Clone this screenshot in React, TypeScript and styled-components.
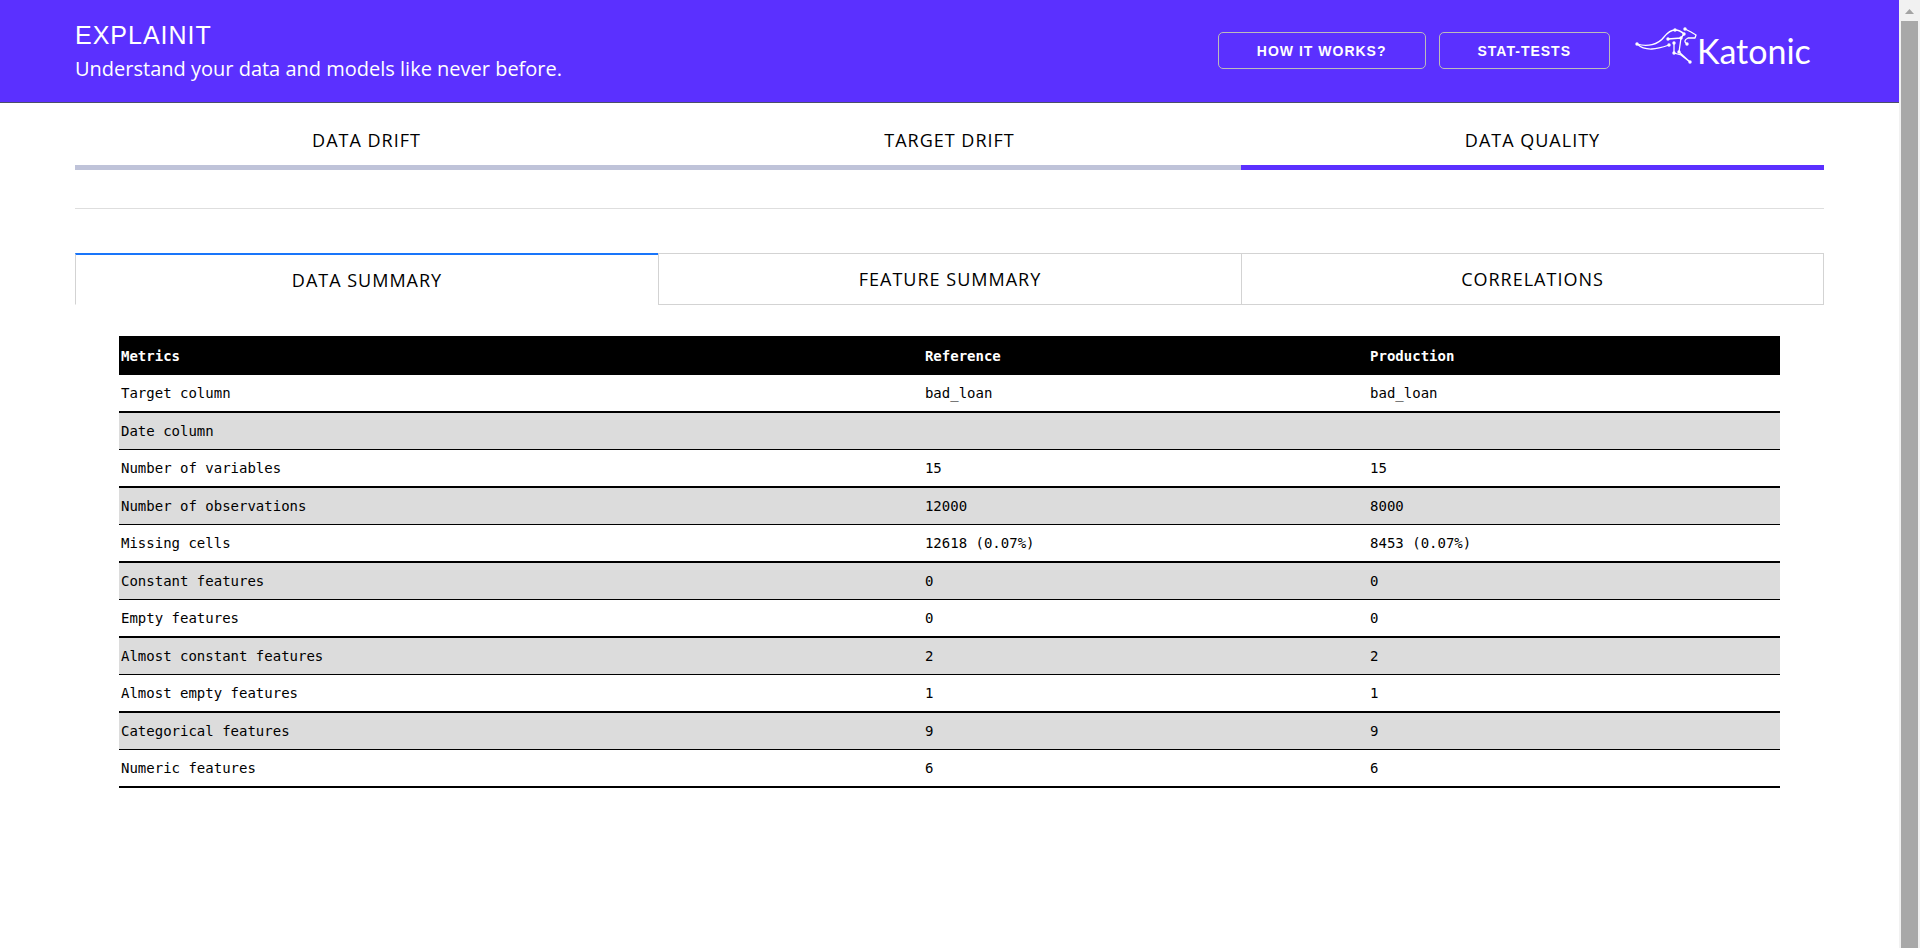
import React from "react";
import styled, { createGlobalStyle } from "styled-components";

const GlobalStyle = createGlobalStyle`
  * { box-sizing: border-box; }
  html, body { margin: 0; height: 100%; background: #fff; color: #000; }
  #root { height: 100%; overflow: hidden; }
  body { font-family: "Open Sans", "Liberation Sans", sans-serif; overflow: hidden; }
`;

const Shell = styled.div`
  display: grid;
  grid-template-columns: minmax(0, 1fr) 21px;
  min-height: 100vh;
`;

const Page = styled.div`
  min-width: 0;
`;

const Scrollbar = styled.div`
  display: flex;
  flex-direction: column;
  align-items: center;
  background: #f1f1f1;
`;

const ScrollArrow = styled.svg`
  flex: none;
  width: 21px;
  height: 21px;
`;

const ScrollThumb = styled.div`
  flex: 1;
  width: 17px;
  background: #a8a8a8;
`;

const Header = styled.header`
  display: flex;
  align-items: center;
  justify-content: space-between;
  height: 103px;
  padding: 0 86px 0 75px;
  background: #5b30ff;
  border-bottom: 1px solid #4c4f69;
  color: #fff;
`;

const Brand = styled.div`
  padding-top: 2px;
`;

const Title = styled.h1`
  margin: 0;
  font: 400 25px/34px "Liberation Sans", Arial, sans-serif;
  letter-spacing: 1px;
`;

const Subtitle = styled.p`
  margin: 0;
  font-size: 20px;
  line-height: 34px;
`;

const Actions = styled.div`
  display: flex;
  align-items: center;
  gap: 13px;
  padding-bottom: 2px;
`;

const HeaderButton = styled.button`
  height: 37px;
  padding: 2px 38px 0;
  border: 1px solid #bbb;
  border-radius: 5px;
  background: transparent;
  color: #fff;
  font: 700 14px/20px "Liberation Sans", Arial, sans-serif;
  letter-spacing: 1px;
`;

const Logo = styled.svg`
  width: 180px;
  height: 52px;
  margin-left: 10px;
`;

const Content = styled.main`
  padding: 0 75px;
`;

const TabList = styled.div`
  display: grid;
  grid-template-columns: repeat(3, 1fr);
`;

const MainTab = styled.button<{ $active?: boolean }>`
  height: 67px;
  padding: 12px 0 0;
  border: 0;
  border-bottom: 5px solid ${(p) => (p.$active ? "#5b30ff" : "#bfc3d9")};
  background: #fff;
  color: #000;
  font: 500 18px/24px "Open Sans", sans-serif;
  letter-spacing: 1px;
`;

const Divider = styled.hr`
  height: 1px;
  margin: 38px 0 44px;
  border: 0;
  background: #dedede;
`;

const SubTab = styled.button<{ $active?: boolean }>`
  height: 52px;
  padding: 0;
  border: 1px solid #d3d3d3;
  border-right-width: 0;
  border-top: ${(p) => (p.$active ? "2px solid #1975fa" : "1px solid #d3d3d3")};
  border-bottom-color: ${(p) => (p.$active ? "#fff" : "#d3d3d3")};
  background: #fff;
  color: #000;
  font: 500 18px/24px "Open Sans", sans-serif;
  letter-spacing: 1px;

  &:last-child {
    border-right-width: 1px;
  }
`;

const TablePanel = styled.section`
  padding: 31px 44px;
`;

const SummaryTable = styled.table`
  width: 100%;
  border-collapse: separate;
  border-spacing: 0;
  table-layout: fixed;
  font: 400 14px/20px "DejaVu Sans Mono", monospace;
`;

const HeadCell = styled.th<{ $width?: string }>`
  width: ${(p) => p.$width ?? "auto"};
  height: 39px;
  padding: 0 2px;
  background: #000;
  color: #fff;
  font-weight: 700;
  text-align: left;
`;

const Cell = styled.td`
  height: 38px;
  padding: 0 2px;
  border-bottom: 2px solid #000;
`;

const Row = styled.tr`
  &:nth-child(even) ${Cell} {
    height: 37px;
    border-bottom-width: 1px;
    background: #dcdcdc;
  }
`;

const metrics: [string, string, string][] = [
  ["Target column", "bad_loan", "bad_loan"],
  ["Date column", "", ""],
  ["Number of variables", "15", "15"],
  ["Number of observations", "12000", "8000"],
  ["Missing cells", "12618 (0.07%)", "8453 (0.07%)"],
  ["Constant features", "0", "0"],
  ["Empty features", "0", "0"],
  ["Almost constant features", "2", "2"],
  ["Almost empty features", "1", "1"],
  ["Categorical features", "9", "9"],
  ["Numeric features", "6", "6"],
];

const joints: [number, number][] = [
  [4, 20], [42, 6], [51, 10], [52, 5], [35, 15], [48, 14], [36, 21], [41, 19], [54, 20], [41, 29], [46, 28], [57, 38],
];

function KatonicLogo() {
  return (
    <Logo viewBox="0 0 180 52" role="img" aria-label="Katonic">
      <g fill="none" stroke="#fff" strokeWidth="1.3" strokeLinecap="round" strokeLinejoin="round">
        <path d="M4 20 C14 23 25 21 31 13 C35 8 38 6 42 6 C46 6 49 8 51 10" />
        <path d="M4 20 C13 28 24 25 36 21" />
        <path d="M35 15 L48 14 L46 28 M48 14 L51 10" />
        <path d="M41 19 L41 29 L48 31 L57 38 M46 28 L57 38" />
        <path d="M52 5 L58 8 L63 11 L62 14 L55 14 C51 16 51 18 54 20" />
        {joints.map(([x, y]) => (
          <circle key={`${x}-${y}`} cx={x} cy={y} r="1.7" fill="#fff" stroke="none" />
        ))}
      </g>
      <text x="64" y="40" fill="#fff" fontFamily="Lato, sans-serif" fontSize="34">Katonic</text>
    </Logo>
  );
}

export default function App() {
  return (
    <>
      <GlobalStyle />
      <Shell>
        <Page>
          <Header>
            <Brand>
              <Title>EXPLAINIT</Title>
              <Subtitle>Understand your data and models like never before.</Subtitle>
            </Brand>
            <Actions>
              <HeaderButton>HOW IT WORKS?</HeaderButton>
              <HeaderButton>STAT-TESTS</HeaderButton>
              <KatonicLogo />
            </Actions>
          </Header>
          <Content>
            <TabList role="tablist">
              <MainTab role="tab">DATA DRIFT</MainTab>
              <MainTab role="tab">TARGET DRIFT</MainTab>
              <MainTab role="tab" aria-selected $active>DATA QUALITY</MainTab>
            </TabList>
            <Divider />
            <TabList role="tablist">
              <SubTab role="tab" aria-selected $active>DATA SUMMARY</SubTab>
              <SubTab role="tab">FEATURE SUMMARY</SubTab>
              <SubTab role="tab">CORRELATIONS</SubTab>
            </TabList>
            <TablePanel>
              <SummaryTable>
                <thead>
                  <tr>
                    <HeadCell scope="col" $width="48.4%">Metrics</HeadCell>
                    <HeadCell scope="col" $width="26.8%">Reference</HeadCell>
                    <HeadCell scope="col">Production</HeadCell>
                  </tr>
                </thead>
                <tbody>
                  {metrics.map(([name, reference, production]) => (
                    <Row key={name}>
                      <Cell>{name}</Cell>
                      <Cell>{reference}</Cell>
                      <Cell>{production}</Cell>
                    </Row>
                  ))}
                </tbody>
              </SummaryTable>
            </TablePanel>
          </Content>
        </Page>
        <Scrollbar aria-hidden="true">
          <ScrollArrow viewBox="0 0 21 21">
            <path d="M6 14 L10.5 9 L15 14 Z" fill="#a3a3a3" />
          </ScrollArrow>
          <ScrollThumb />
        </Scrollbar>
      </Shell>
    </>
  );
}
